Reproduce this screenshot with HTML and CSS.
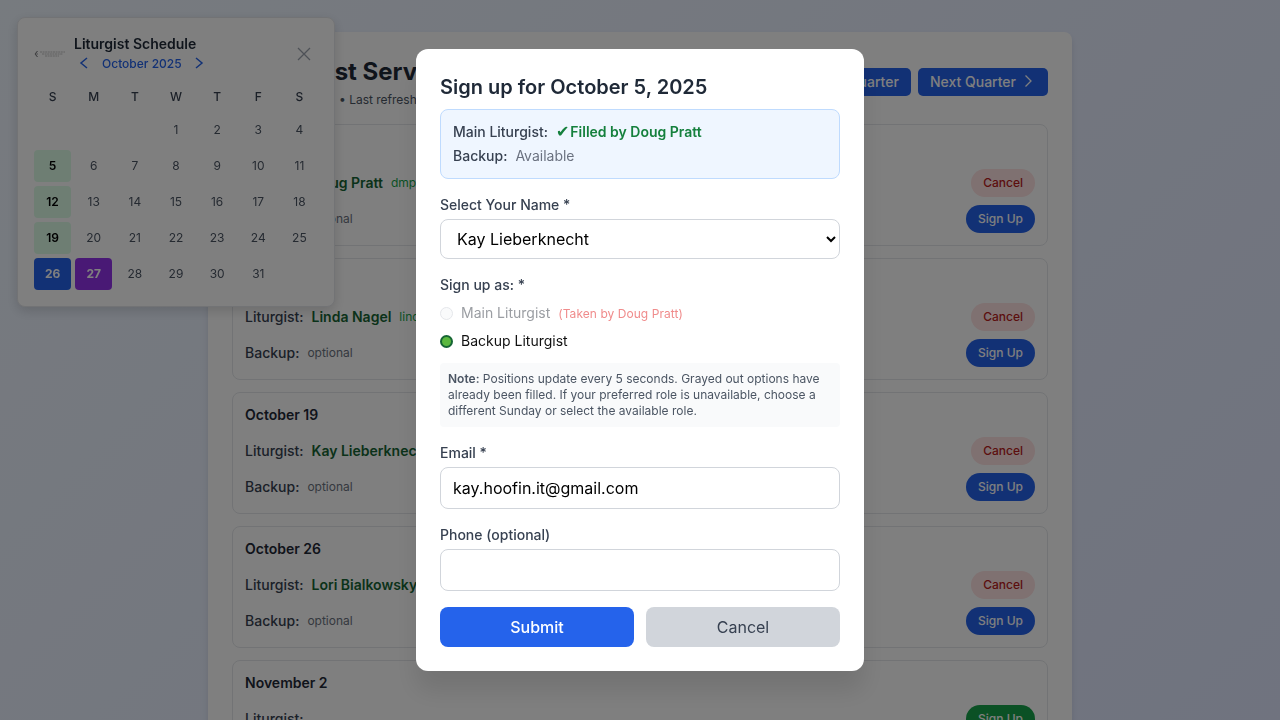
FILE: index.html
```html
<!DOCTYPE html>
<html>
	<head>
		<meta charset="utf-8">
		<title>Liturgist Services</title>
		<link rel="stylesheet" href="styles.css">
	</head>
	<body>
		<div class="page">
			<div class="panel">
				<div class="panel-head">
					<div class="brand">
						<svg class="brand-logo" width="24" height="8" viewBox="0 0 32 8" fill="none"><path d="M3.500 1 1 4l2.500 3" stroke="#55565a"/><path d="M5 2.500h26M8 4.500h21M11 6.500h14" stroke="#9a9a9d" stroke-width=".8" stroke-dasharray="2 .6"/></svg>
						<div>
							<h1>Liturgist Services</h1>
							<p class="sub"><span class="sub-quarter">Q4 2025</span>• Last refreshed 9:41 AM</p>
						</div>
					</div>
					<div class="quarter-nav">
						<a class="quarter-btn">Previous Quarter</a>
						<a class="quarter-btn">Next Quarter
							<svg width="16" height="16" viewBox="0 0 16 16" fill="none" stroke="currentColor" stroke-width="1.300"><path d="M5.500 2.500 11 8l-5.500 5.500"/></svg>
						</a>
					</div>
				</div>

				<div class="card">
					<h3>October 5</h3>
					<div class="row">
						<div class="who"><span class="role">Liturgist:</span><span class="name">Doug Pratt</span><span class="mail">dmpratt@sbcglobal.net</span></div>
						<a class="pill pill-cancel">Cancel</a>
					</div>
					<div class="row">
						<div class="who"><span class="role">Backup:</span><span class="optional">optional</span></div>
						<a class="pill pill-sign">Sign Up</a>
					</div>
				</div>
				<div class="card">
					<h3>October 12</h3>
					<div class="row">
						<div class="who"><span class="role">Liturgist:</span><span class="name">Linda Nagel</span><span class="mail">lindanagel@gmail.com</span></div>
						<a class="pill pill-cancel">Cancel</a>
					</div>
					<div class="row">
						<div class="who"><span class="role">Backup:</span><span class="optional">optional</span></div>
						<a class="pill pill-sign">Sign Up</a>
					</div>
				</div>
				<div class="card">
					<h3>October 19</h3>
					<div class="row">
						<div class="who"><span class="role">Liturgist:</span><span class="name">Kay Lieberknecht</span><span class="mail">kay.hoofin.it@gmail.com</span></div>
						<a class="pill pill-cancel">Cancel</a>
					</div>
					<div class="row">
						<div class="who"><span class="role">Backup:</span><span class="optional">optional</span></div>
						<a class="pill pill-sign">Sign Up</a>
					</div>
				</div>
				<div class="card">
					<h3>October 26</h3>
					<div class="row">
						<div class="who"><span class="role">Liturgist:</span><span class="name">Lori Bialkowsky</span><span class="mail">lori@example.com</span></div>
						<a class="pill pill-cancel">Cancel</a>
					</div>
					<div class="row">
						<div class="who"><span class="role">Backup:</span><span class="optional">optional</span></div>
						<a class="pill pill-sign">Sign Up</a>
					</div>
				</div>
				<div class="card">
					<h3>November 2</h3>
					<div class="row">
						<div class="who"><span class="role">Liturgist:</span></div>
						<a class="pill pill-green">Sign Up</a>
					</div>
				</div>
			</div>
		</div>

		<div class="calendar">
			<div class="cal-head">
				<div class="cal-logo">
					<svg width="32" height="8" viewBox="0 0 32 8" fill="none"><path d="M3.500 1 1 4l2.500 3" stroke="#66676b"/><path d="M1 4h3" stroke="#9a9a9d"/><path d="M6 2h25M8 4h21M11 6h14" stroke="#a8a8aa" stroke-width=".7" stroke-dasharray="2 .6"/></svg>
				</div>
				<div class="cal-title">
					<h2>Liturgist Schedule</h2>
					<div class="cal-month">
						<svg width="16" height="16" viewBox="0 0 16 16" fill="none" stroke="currentColor" stroke-width="1.500"><path d="M11 3 5 8l6 5"/></svg>
						<span>October 2025</span>
						<svg class="month-next" width="16" height="16" viewBox="0 0 16 16" fill="none" stroke="currentColor" stroke-width="1.500"><path d="m5 3 6 5-6 5"/></svg>
					</div>
				</div>
				<svg class="cal-close" width="16" height="16" viewBox="0 0 16 16" fill="none" stroke="currentColor" stroke-width="1.300"><path d="m2 2 12 12M14 2 2 14"/></svg>
			</div>
			<div class="cal-week">
				<span>S</span><span>M</span><span>T</span><span>W</span><span>T</span><span>F</span><span>S</span>
			</div>
			<div class="cal-grid">
				<span></span><span></span><span></span><span>1</span><span>2</span><span>3</span><span>4</span>
				<span class="day-sunday">5</span><span>6</span><span>7</span><span>8</span><span>9</span><span>10</span><span>11</span>
				<span class="day-sunday">12</span><span>13</span><span>14</span><span>15</span><span>16</span><span>17</span><span>18</span>
				<span class="day-sunday">19</span><span>20</span><span>21</span><span>22</span><span>23</span><span>24</span><span>25</span>
				<span class="day-blue">26</span><span class="day-purple">27</span><span>28</span><span>29</span><span>30</span><span>31</span><span></span>
			</div>
		</div>

		<div class="overlay">
			<div class="modal">
				<h2 class="modal-title">Sign up for October 5, 2025</h2>
				<div class="info">
					<div class="info-line"><span class="info-label">Main Liturgist:</span><span class="info-filled"><span class="check">✔</span>Filled by Doug Pratt</span></div>
					<div class="info-line"><span class="info-label">Backup:</span><span class="info-free">Available</span></div>
				</div>

				<label class="field-label">Select Your Name *</label>
				<select class="field-select">
					<option>Kay Lieberknecht</option>
				</select>

				<label class="field-label label-role">Sign up as: *</label>
				<div class="radio-row radio-off">
					<span class="radio"></span>
					<span>Main Liturgist</span>
					<span class="taken">(Taken by Doug Pratt)</span>
				</div>
				<div class="radio-row">
					<span class="radio radio-on"></span>
					<span>Backup Liturgist</span>
				</div>

				<div class="note"><b>Note:</b> Positions update every 5 seconds. Grayed out options have already been filled. If your preferred role is unavailable, choose a different Sunday or select the available role.</div>

				<label class="field-label">Email *</label>
				<input class="field-input" type="text" value="kay.hoofin.it@gmail.com">

				<label class="field-label">Phone (optional)</label>
				<input class="field-input" type="text">

				<div class="modal-actions">
					<button class="btn btn-submit">Submit</button>
					<button class="btn btn-cancel">Cancel</button>
				</div>
			</div>
		</div>
	</body>
</html>
```

FILE: styles.css
```css
*{
	margin: 0;
	padding: 0;
	box-sizing: border-box;
}
html,body{
	height: 100%;
	overflow: hidden;
}
body{
	font-family: Inter, "Noto Sans", sans-serif;
	background: linear-gradient(135deg, #eff6ff 0%, #e0e7ff 100%);
	color: #1f2937;
}
.page{
	height: 100%;
	padding-top: 32px;
}
.panel{
	width: 864px;
	margin: 0 auto;
	background-color: #fff;
	border-radius: 8px;
	padding: 24px;
	box-shadow: 0 4px 6px rgba(0,0,0,.1);
}
.panel-head{
	display: flex;
	justify-content: space-between;
	margin-bottom: 16px;
}
.brand{
	display: flex;
	gap: 4px;
}
.brand-logo{
	margin-top: 12px;
}
h1{
	font-size: 24px;
	line-height: 32px;
	font-weight: 700;
	color: #1f2937;
}
.sub{
	display: flex;
	font-size: 12px;
	line-height: 16px;
	margin-top: 4px;
	color: #4b5563;
	white-space: pre;
}
.sub-quarter{
	width: 79px;
}
.quarter-nav{
	display: flex;
	gap: 7px;
	margin-top: 12px;
}
.quarter-btn{
	display: flex;
	align-items: center;
	gap: 4px;
	height: 28px;
	padding: 0 12px 2px;
	border-radius: 5px;
	background-color: #2563eb;
	color: #fff;
	font-size: 14px;
	font-weight: 500;
}
.card{
	border: 1px solid #e5e7eb;
	border-radius: 8px;
	padding: 12px;
	margin-bottom: 12px;
}
.card h3{
	font-size: 14px;
	line-height: 20px;
	font-weight: 600;
	color: #1f2937;
	margin-bottom: 12px;
}
.row{
	display: flex;
	justify-content: space-between;
	align-items: center;
	height: 28px;
	margin-bottom: 8px;
	white-space: nowrap;
}
.row:last-child{
	margin-bottom: 0;
}
.who{
	display: flex;
	align-items: center;
	line-height: 18px;
}
.role{
	font-size: 14px;
	font-weight: 500;
	color: #374151;
	margin-right: 8px;
}
.name{
	font-size: 14px;
	font-weight: 600;
	color: #166534;
	margin-right: 8px;
}
.mail{
	font-size: 12px;
	color: #16a34a;
}
.optional{
	font-size: 12px;
	color: #6b7280;
}
.pill{
	display: block;
	height: 28px;
	line-height: 28px;
	padding: 0 12px;
	border-radius: 14px;
	font-size: 12px;
	font-weight: 500;
}
.pill-cancel{
	background-color: #fee2e2;
	color: #b91c1c;
}
.pill-sign{
	background-color: #2563eb;
	color: #fff;
}
.pill-green{
	background-color: #16a34a;
	color: #fff;
}

/* calendar */
.calendar{
	position: fixed;
	left: 17px;
	top: 17px;
	width: 318px;
	height: 290px;
	background-color: #fff;
	border: 1px solid #e5e7eb;
	border-radius: 8px;
	box-shadow: 0 4px 12px rgba(0,0,0,.15);
	padding: 16px;
}
.cal-head{
	display: flex;
	align-items: center;
	height: 40px;
}
.cal-logo{
	width: 40px;
	display: flex;
}
.cal-title{
	flex: 1;
	margin-bottom: 2px;
}
.cal-title h2{
	font-size: 14px;
	line-height: 20px;
	font-weight: 600;
	color: #1f2937;
}
.cal-month{
	display: flex;
	align-items: center;
	gap: 10px;
	height: 18px;
	margin-left: 2px;
	color: #2563eb;
	font-size: 12px;
	font-weight: 500;
}
.month-next{
	margin-left: -1px;
}
.cal-close{
	color: #9ca3af;
	margin-right: 6px;
}
.cal-week{
	display: grid;
	grid-template-columns: repeat(7, 1fr);
	gap: 4px;
	margin-top: 13px;
	height: 20px;
	line-height: 20px;
	text-align: center;
	font-size: 12px;
	font-weight: 500;
	color: #374151;
}
.cal-grid{
	display: grid;
	grid-template-columns: repeat(7, 1fr);
	grid-auto-rows: 32px;
	gap: 4px;
	margin-top: 7px;
	font-size: 12px;
	color: #4b5563;
}
.cal-grid span{
	display: flex;
	align-items: center;
	justify-content: center;
	padding-bottom: 1px;
	border-radius: 4px;
}
.cal-grid .day-sunday{
	background-color: #dcfce7;
	color: #000;
	font-weight: 600;
}
.cal-grid .day-blue{
	background-color: #2563eb;
	color: #fff;
	font-weight: 700;
}
.cal-grid .day-purple{
	background-color: #9333ea;
	color: #fff;
	font-weight: 700;
}

/* modal */
.overlay{
	position: fixed;
	left: 0;
	top: 0;
	width: 100%;
	height: 100%;
	background-color: rgba(0,0,0,.5);
	display: flex;
	align-items: center;
	justify-content: center;
}
.modal{
	width: 448px;
	height: 622px;
	background-color: #fff;
	border-radius: 12px;
	padding: 24px;
	box-shadow: 0 20px 25px rgba(0,0,0,.1);
}
.modal-title{
	font-size: 20px;
	line-height: 28px;
	font-weight: 600;
	color: #1f2937;
	margin-bottom: 8px;
}
.info{
	height: 70px;
	padding: 10px 12px;
	background-color: #eff6ff;
	border: 1px solid #bfdbfe;
	border-radius: 8px;
	margin-bottom: 16px;
}
.info-line{
	font-size: 14px;
	line-height: 24px;
}
.info-label{
	font-weight: 500;
	color: #374151;
	margin-right: 8px;
}
.info-filled{
	font-weight: 600;
	color: #15803d;
}
.check{
	font-family: "DejaVu Sans", sans-serif;
	font-size: 16px;
	line-height: 1;
	font-weight: 400;
	margin-right: 1px;
}
.info-free{
	color: #6b7280;
}
.field-label{
	display: block;
	font-size: 14px;
	line-height: 20px;
	font-weight: 500;
	color: #374151;
	margin-bottom: 4px;
}
.field-select{
	display: block;
	width: 100%;
	height: 40px;
	padding: 0 12px;
	font-family: Inter, sans-serif;
	font-size: 16px;
	color: #000;
	background-color: #fff;
	border: 1px solid #d1d5db;
	border-radius: 8px;
	margin-bottom: 16px;
}
.label-role{
	margin-bottom: 7px;
}
.radio-row{
	display: flex;
	align-items: center;
	gap: 8px;
	height: 20px;
	margin-bottom: 8px;
	font-size: 14px;
	color: #111;
}
.radio-off{
	color: #9b9ea3;
}
.radio{
	width: 13px;
	height: 13px;
	margin-top: 2px;
	border-radius: 50%;
	border: 1px solid #e5e7eb;
	background-color: #f9fafb;
}
.radio-on{
	border: 2px solid #166534;
	background-color: #5bb83f;
}
.taken{
	font-size: 12px;
	margin-top: 2px;
	letter-spacing: .05px;
	color: #f08c8c;
}
.note{
	height: 64px;
	margin-top: 13px;
	margin-bottom: 16px;
	padding: 8px;
	font-size: 12px;
	line-height: 16px;
	color: #4b5563;
	background-color: #f9fafb;
	border-radius: 4px;
}
.note b{
	font-weight: 600;
}
.field-input{
	display: block;
	width: 100%;
	height: 42px;
	padding: 0 12px;
	font-family: Inter, sans-serif;
	font-size: 16px;
	color: #000;
	background-color: #fff;
	border: 1px solid #d1d5db;
	border-radius: 8px;
	margin-bottom: 16px;
}
.modal-actions{
	display: flex;
	gap: 12px;
}
.btn{
	flex: 1;
	height: 40px;
	border: 0;
	border-radius: 8px;
	font-family: Inter, sans-serif;
	font-size: 16px;
	font-weight: 500;
}
.btn-submit{
	background-color: #2563eb;
	color: #fff;
}
.btn-cancel{
	background-color: #d1d5db;
	color: #374151;
	font-weight: 400;
}
```
